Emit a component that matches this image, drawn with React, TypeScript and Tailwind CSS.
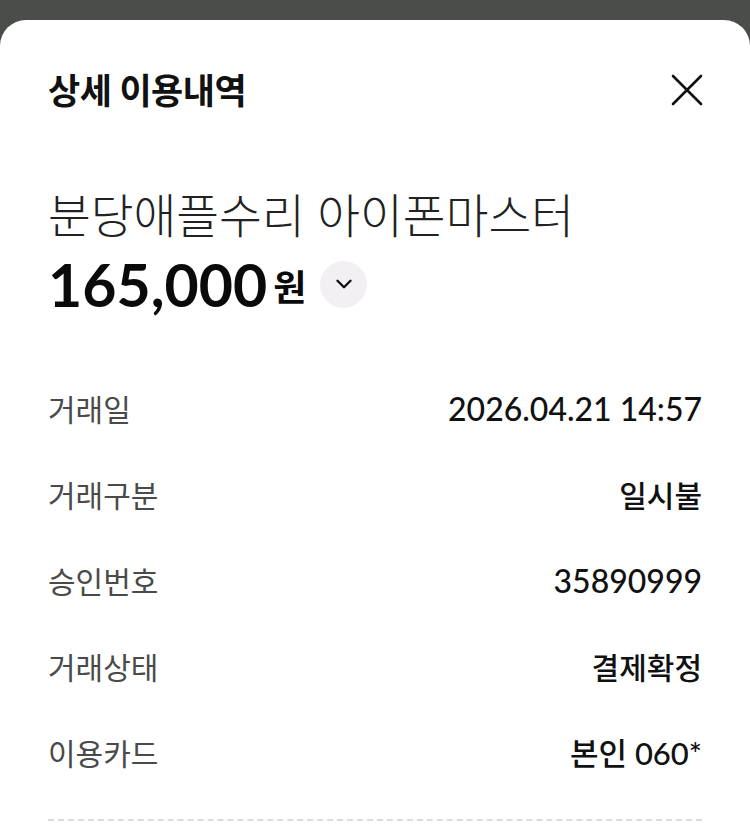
import { ChevronDown } from "lucide-react";

const rows = [
  { label: "거래일", value: "2026.04.21 14:57", size: "text-[32px]" },
  { label: "거래구분", value: "일시불", size: "text-[30px]" },
  { label: "승인번호", value: "35890999", size: "text-[32px]" },
  { label: "거래상태", value: "결제확정", size: "text-[30px]" },
  { label: "이용카드", value: "본인 060*", size: "text-[31px]" },
];

export default function App() {
  return (
    <div
      className="h-[826px] overflow-hidden bg-[#4b4d4a] pt-[20px]"
      style={{ fontFamily: 'Lato, "Noto Sans CJK KR", sans-serif' }}
    >
      <div className="h-full rounded-t-[26px] bg-white px-[48px] pt-[48px]">
        {/* 헤더 */}
        <div className="flex h-[44px] items-center justify-between">
          <h1 className="text-[35px] font-bold tracking-[-0.5px] text-[#111]">상세 이용내역</h1>
          <button className="flex h-[32px] w-[32px] items-center justify-center -mr-[1px]">
            <svg width="32" height="32" viewBox="0 0 32 32" fill="none">
              <path d="M2 2L30 30M30 2L2 30" stroke="#111" strokeWidth="2.6" strokeLinecap="round" />
            </svg>
          </button>
        </div>

        {/* 가맹점 / 금액 */}
        <p className="mt-[75px] h-[56px] whitespace-nowrap text-[46.5px] leading-[56px] font-light text-[#222]">
          분당애플수리 아이폰마스터
        </p>
        <div className="mt-[9px] flex h-[64px] items-center">
          <span className="text-[59px] font-bold leading-none text-[#0a0a0a]">165,000</span>
          <span className="ml-[6px] mt-[5px] text-[36px] font-bold leading-none text-[#0a0a0a]">원</span>
          <span className="ml-[14px] flex h-[47px] w-[47px] items-center justify-center rounded-full bg-[#f3f0f3]">
            <ChevronDown size={26} strokeWidth={2.2} color="#111" />
          </span>
        </div>

        {/* 상세 항목 */}
        <div className="mt-[50px]">
          {rows.map((row) => (
            <div key={row.label} className="flex h-[86px] items-center justify-between">
              <span className="text-[30px] text-[#4a4a4a]">{row.label}</span>
              <span className={`${row.size} font-medium text-[#111]`}>{row.value}</span>
            </div>
          ))}
        </div>

        <div className="mt-[23px] border-t-2 border-dashed border-[#dcdcdc]" />
      </div>
    </div>
  );
}
